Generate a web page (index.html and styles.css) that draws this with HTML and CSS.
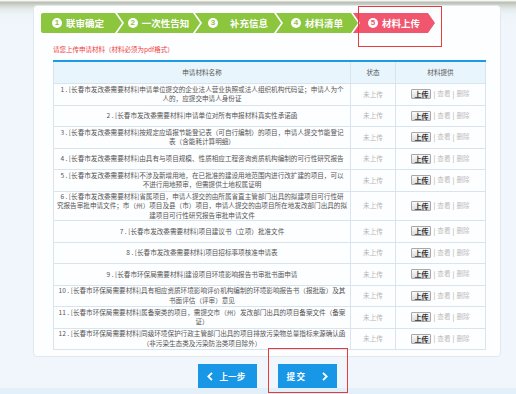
FILE: index.html
```html
<!DOCTYPE html>
<html lang="zh-CN">
<head>
<meta charset="utf-8">
<title>材料上传</title>
<link rel="stylesheet" href="styles.css">
</head>
<body>
<div class="wrap">
  <div class="card">
    <div class="steps">
      <div class="step first"><span class="num">1</span><span>联审确定</span></div>
      <div class="step"><span class="num">2</span><span>一次性告知</span></div>
      <div class="step wide"><span class="num">3</span><span>补充信息</span></div>
      <div class="step"><span class="num">4</span><span>材料清单</span></div>
      <div class="step active"><span class="num">5</span><span>材料上传</span></div>
    </div>
    <p class="notice">请您上传申请材料（材料必须为pdf格式）</p>
    <table class="mat">
      <thead>
        <tr><th class="c-name">申请材料名称</th><th class="c-status">状态</th><th class="c-op">材料提供</th></tr>
      </thead>
      <tbody>
        <tr><td class="name">1 . [长春市发改委需要材料]申请单位提交的企业法人营业执照或法人组织机构代码证；申请人为个<br>人的，应提交申请人身份证</td><td class="status">未上传</td><td class="op"><button class="up">上传</button><span class="sep">|</span><a>查看</a><span class="sep">|</span><a>删除</a></td></tr>
        <tr><td class="name">2 . [长春市发改委需要材料]申请单位对所有申报材料真实性承诺函</td><td class="status">未上传</td><td class="op"><button class="up">上传</button><span class="sep">|</span><a>查看</a><span class="sep">|</span><a>删除</a></td></tr>
        <tr><td class="name">3 . [长春市发改委需要材料]按规定应填报节能登记表（可自行编制）的项目，申请人提交节能登记<br>表（含能耗计算明细）</td><td class="status">未上传</td><td class="op"><button class="up">上传</button><span class="sep">|</span><a>查看</a><span class="sep">|</span><a>删除</a></td></tr>
        <tr><td class="name">4 . [长春市发改委需要材料]由具有与项目规模、性质相应工程咨询资质机构编制的可行性研究报告</td><td class="status">未上传</td><td class="op"><button class="up">上传</button><span class="sep">|</span><a>查看</a><span class="sep">|</span><a>删除</a></td></tr>
        <tr><td class="name">5 . [长春市发改委需要材料]不涉及新增用地，在已批准的建设用地范围内进行改扩建的项目，可以<br>不进行用地预审，但需提供土地权属证明</td><td class="status">未上传</td><td class="op"><button class="up">上传</button><span class="sep">|</span><a>查看</a><span class="sep">|</span><a>删除</a></td></tr>
        <tr><td class="name">6 . [长春市发改委需要材料]省属项目，申请人提交的由所属省直主管部门出具的拟建项目可行性研<br>究报告审批申请文件；市（州）项目及县（市）项目，申请人提交的由项目所在地发改部门出具的拟<br>建项目可行性研究报告审批申请文件</td><td class="status">未上传</td><td class="op"><button class="up">上传</button><span class="sep">|</span><a>查看</a><span class="sep">|</span><a>删除</a></td></tr>
        <tr><td class="name">7 . [长春市发改委需要材料]项目建议书（立项）批准文件</td><td class="status">未上传</td><td class="op"><button class="up">上传</button><span class="sep">|</span><a>查看</a><span class="sep">|</span><a>删除</a></td></tr>
        <tr><td class="name">8 . [长春市发改委需要材料]项目招标事项核准申请表</td><td class="status">未上传</td><td class="op"><button class="up">上传</button><span class="sep">|</span><a>查看</a><span class="sep">|</span><a>删除</a></td></tr>
        <tr><td class="name">9 . [长春市环保局需要材料]建设项目环境影响报告书审批书面申请</td><td class="status">未上传</td><td class="op"><button class="up">上传</button><span class="sep">|</span><a>查看</a><span class="sep">|</span><a>删除</a></td></tr>
        <tr><td class="name">10 . [长春市环保局需要材料]具有相应资质环境影响评价机构编制的环境影响报告书（报批版）及其<br>书面评估（评审）意见</td><td class="status">未上传</td><td class="op"><button class="up">上传</button><span class="sep">|</span><a>查看</a><span class="sep">|</span><a>删除</a></td></tr>
        <tr><td class="name">11 . [长春市环保局需要材料]属备案类的项目，需提交市（州）发改部门出具的项目备案文件（备案<br>证）</td><td class="status">未上传</td><td class="op"><button class="up">上传</button><span class="sep">|</span><a>查看</a><span class="sep">|</span><a>删除</a></td></tr>
        <tr><td class="name">12 . [长春市环保局需要材料]同级环境保护行政主管部门出具的项目排放污染物总量指标来源确认函<br>（非污染生态类及污染防治类项目除外）</td><td class="status">未上传</td><td class="op"><button class="up">上传</button><span class="sep">|</span><a>查看</a><span class="sep">|</span><a>删除</a></td></tr>
      </tbody>
    </table>
  </div>
  <div class="actions">
    <a class="btn prev"><svg width="6" height="9" viewBox="0 0 6 9"><polyline points="5,0.8 1.3,4.5 5,8.2" fill="none" stroke="#fff" stroke-width="1.8"/></svg><span>上一步</span></a>
    <a class="btn next"><span class="sp">提交</span><svg width="6" height="9" viewBox="0 0 6 9"><polyline points="1,0.8 4.7,4.5 1,8.2" fill="none" stroke="#fff" stroke-width="1.8"/></svg></a>
  </div>
</div>
<div class="mark mark-step"></div>
<div class="mark mark-submit"></div>
</body>
</html>
```
FILE: styles.css
```css
html, body {
  margin: 0;
  padding: 0;
}
body {
  width: 516px;
  height: 394px;
  overflow: hidden;
  position: relative;
  font-family: "Noto Sans CJK SC", "Noto Sans", sans-serif;
  background:
    linear-gradient(to bottom, rgba(0,0,0,0) 0, rgba(0,0,0,0) 388px, #e3eff9 388px, #e3eff9 394px),
    linear-gradient(to bottom, #f6f6f4 0, #f6f6f4 1px, #b8bcb2 2px, #cfd4cc 5px, #e3eae9 9px, #edf4f8 14px, #f0f6fb 24px, #f0f6fb 100%);
}
.wrap {
  padding: 5px 0 0 33px;
}
.card {
  box-sizing: border-box;
  width: 468px;
  height: 352px;
  background: #fdfeff;
  border: 1px solid #e1e8ee;
  border-radius: 4px;
  padding: 7px 18px 0 7px;
}
.steps {
  display: flex;
  height: 20px;
}
.step {
  box-sizing: border-box;
  height: 20px;
  width: 83px;
  margin-left: -5px;
  background: #8cc53e;
  color: #fff;
  font-weight: 700;
  font-size: 9.5px;
  display: flex;
  align-items: center;
  justify-content: center;
  gap: 4px;
  padding: 0 7px 0 7px;
  clip-path: polygon(0 0, calc(100% - 7px) 0, 100% 50%, calc(100% - 7px) 100%, 0 100%, 7px 50%);
}
.step.first {
  width: 81px;
  margin-left: 0;
  padding-left: 0;
  clip-path: polygon(0 0, calc(100% - 7px) 0, 100% 50%, calc(100% - 7px) 100%, 0 100%);
  border-radius: 2px 0 0 2px;
}
.step.wide {
  width: 86px;
  gap: 12px;
}
.step:nth-child(4), .step.active {
  width: 82px;
}
.step.active {
  background: #f1566f;
}
.num {
  width: 10px;
  height: 10px;
  border-radius: 50%;
  background: #fff;
  color: #8cc53e;
  font-size: 8px;
  line-height: 10px;
  text-align: center;
  font-family: "Liberation Sans", Arial, sans-serif;
  font-weight: 700;
}
.step.active .num {
  color: #f1566f;
}
.notice {
  margin: 11px 0 0 12px;
  font-size: 6.5px;
  line-height: 10px;
  height: 10px;
  color: #f03c3c;
}
.mat {
  margin: 6px 0 0 12px;
  width: 429px;
  border-collapse: collapse;
  table-layout: fixed;
  border-top: 2px solid #1d9ae6;
  font-size: 6.6px;
  color: #555;
}
.mat th, .mat td {
  border: 1px solid #d9e4ec;
  text-align: center;
  vertical-align: middle;
  line-height: 9.5px;
}
.mat th {
  border-top: 0;
  background: #e9f5fd;
  font-weight: 400;
  color: #555;
  height: 21px;
  padding: 0;
}
.mat td {
  height: 20.5px;
  padding: 0 1px;
}
.mat td.name {
  white-space: nowrap;
}
.c-name { width: 296px; }
.c-status { width: 44px; }
.c-op { width: 89px; }
.mat td.status {
  color: #b5b5b5;
}
.op {
  white-space: nowrap;
  color: #b8b8b8;
}
.up {
  box-sizing: border-box;
  width: 20px;
  height: 10px;
  padding: 0;
  margin: 0;
  border: 1px solid #a8a8a8;
  border-radius: 1px;
  background: linear-gradient(#fbfbfb, #dadada);
  font-family: "Noto Sans CJK SC", sans-serif;
  font-size: 7px;
  line-height: 8px;
  color: #333;
  font-weight: 700;
  vertical-align: middle;
}
.sep {
  color: #a49a88;
  margin: 0 2px;
  font-size: 7px;
  vertical-align: middle;
}
.op a {
  color: #bdbdbd;
  vertical-align: middle;
}
.actions {
  width: 468px;
  display: flex;
  justify-content: center;
  gap: 21px;
  margin-top: 7px;
}
.btn {
  box-sizing: border-box;
  width: 59px;
  height: 24px;
  background: #1897e7;
  color: #fff;
  font-weight: 700;
  font-size: 8.6px;
  display: flex;
  align-items: center;
  padding: 0 9px;
}
.prev {
  gap: 7px;
}
.next {
  justify-content: space-between;
}
.sp {
  letter-spacing: 1.5px;
}
.mark {
  position: absolute;
  border: 1px solid #ea3b3b;
  box-sizing: border-box;
}
.mark-step {
  left: 358px;
  top: 6px;
  width: 84px;
  height: 41px;
}
.mark-submit {
  left: 268px;
  top: 348px;
  width: 80px;
  height: 45px;
}
```
